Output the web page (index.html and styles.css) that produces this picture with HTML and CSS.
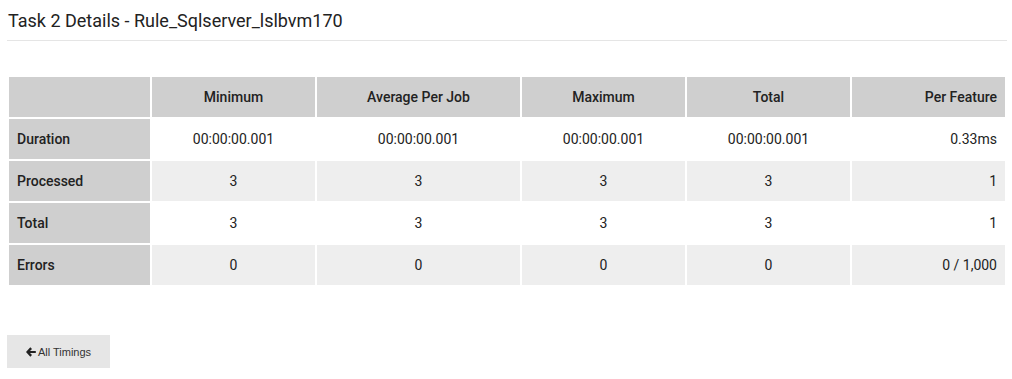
FILE: index.html
```html
<!DOCTYPE html>
<html>
<head>
<meta charset="utf-8">
<link rel="stylesheet" href="styles.css">
</head>
<body>
<div class="page">
  <h1 class="title">Task 2 Details - Rule_Sqlserver_lslbvm170</h1>
  <table class="stats">
    <colgroup>
      <col class="c1"><col class="c2"><col class="c3"><col class="c4"><col class="c5"><col class="c6">
    </colgroup>
    <thead>
      <tr><th></th><th>Minimum</th><th>Average Per Job</th><th>Maximum</th><th>Total</th><th class="right">Per Feature</th></tr>
    </thead>
    <tbody>
      <tr><th class="rowh">Duration</th><td>00:00:00.001</td><td>00:00:00.001</td><td>00:00:00.001</td><td>00:00:00.001</td><td class="right">0.33ms</td></tr>
      <tr class="alt"><th class="rowh">Processed</th><td>3</td><td>3</td><td>3</td><td>3</td><td class="right">1</td></tr>
      <tr><th class="rowh">Total</th><td>3</td><td>3</td><td>3</td><td>3</td><td class="right">1</td></tr>
      <tr class="alt"><th class="rowh">Errors</th><td>0</td><td>0</td><td>0</td><td>0</td><td class="right">0 / 1,000</td></tr>
    </tbody>
  </table>
  <button class="back"><svg class="arrow" width="10" height="10" viewBox="0 0 10 10"><path d="M4.3 0.3 L6.0 2.0 L4.0 3.9 L9.8 3.9 L9.8 6.1 L4.0 6.1 L6.0 8.0 L4.3 9.7 L-0.1 5 Z" fill="#222"/></svg>All Timings</button>
</div>
</body>
</html>
```
FILE: styles.css
```css
html, body {
  margin: 0;
  padding: 0;
  background: #fff;
}
.page {
  padding: 0 7px;
  font-family: Roboto, "Liberation Sans", sans-serif;
  color: #333;
}
.title {
  margin: 0;
  width: 1000px;
  box-sizing: border-box;
  padding: 10px 0 0 1px;
  height: 41px;
  font-size: 18px;
  font-weight: 400;
  line-height: 22px;
  color: #222;
  border-bottom: 1px solid #e5e5e5;
}
.stats {
  margin-top: 34px;
  width: 1000px;
  table-layout: fixed;
  border-collapse: separate;
  border-spacing: 2px;
  font-size: 14px;
}
.c1 { width: 141px; }
.c2 { width: 163px; }
.c3 { width: 203px; }
.c4 { width: 163px; }
.c5 { width: 163px; }
.c6 { width: 153px; }
.stats th, .stats td {
  height: 40px;
  padding: 0 8px;
  text-align: center;
  vertical-align: middle;
}
.stats thead th {
  background: #cfcfcf;
  font-weight: 500;
  color: #222;
}
.stats th.rowh {
  background: #cfcfcf;
  text-align: left;
  font-weight: 500;
  color: #222;
}
.stats td {
  background: #fff;
  color: #222;
}
.stats tr.alt td {
  background: #eeeeee;
}
.stats .right {
  text-align: right;
}
.back {
  margin-top: 48px;
  width: 103px;
  height: 33px;
  border: 0;
  background: #e6e6e6;
  font-family: "Liberation Sans", Arial, sans-serif;
  font-size: 11px;
  color: #333;
  display: flex;
  align-items: center;
  justify-content: center;
  gap: 2px;
  padding: 0;
}
.arrow {
  display: block;
}
```
